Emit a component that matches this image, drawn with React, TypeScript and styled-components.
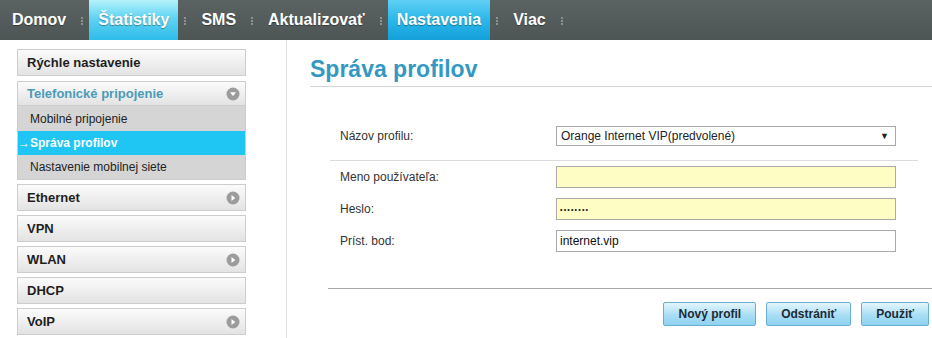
import React from "react";
import styled, { createGlobalStyle } from "styled-components";

const GlobalStyle = createGlobalStyle`
  body {
    margin: 0;
    background: #fff;
    font-family: "Liberation Sans", Arial, sans-serif;
  }
`;

const navItems = [
  { label: "Domov" },
  { label: "Štatistiky", active: "light" },
  { label: "SMS" },
  { label: "Aktualizovať" },
  { label: "Nastavenia", active: "strong" },
  { label: "Viac" },
];

const menu = [
  { label: "Rýchle nastavenie" },
  {
    label: "Telefonické pripojenie",
    open: true,
    sub: ["Mobilné pripojenie", "Správa profilov", "Nastavenie mobilnej siete"],
  },
  { label: "Ethernet", arrow: true },
  { label: "VPN" },
  { label: "WLAN", arrow: true },
  { label: "DHCP" },
  { label: "VoIP", arrow: true },
];

const Circle = ({ down }: { down?: boolean }) => (
  <svg width="14" height="14" viewBox="0 0 14 14">
    <circle cx="7" cy="7" r="6.5" fill="#9c9c9c" />
    {down ? (
      <polygon points="4,5.3 10,5.3 7,9" fill="#fff" />
    ) : (
      <polygon points="5.5,4 9.3,7 5.5,10" fill="#fff" />
    )}
  </svg>
);

export default function App() {
  return (
    <Page>
      <GlobalStyle />
      <NavBar>
        {navItems.map((n) => (
          <React.Fragment key={n.label}>
            <NavItem $active={n.active}>{n.label}</NavItem>
            <NavSep />
          </React.Fragment>
        ))}
      </NavBar>
      <Body>
        <Sidebar>
          {menu.map((m) => (
            <MenuGroup key={m.label}>
              <MenuItem $open={m.open}>
                <span>{m.label}</span>
                {(m.arrow || m.open) && <Circle down={m.open} />}
              </MenuItem>
              {m.sub && (
                <SubMenu>
                  {m.sub.map((s) => (
                    <SubItem key={s} $selected={s === "Správa profilov"}>
                      {s === "Správa profilov" ? "→" + s : s}
                    </SubItem>
                  ))}
                </SubMenu>
              )}
            </MenuGroup>
          ))}
        </Sidebar>
        <Main>
          <Title>Správa profilov</Title>
          <Form>
            <Row>
              <Label>Názov profilu:</Label>
              <SelectBox>
                <span>Orange Internet VIP(predvolené)</span>
                <span>▼</span>
              </SelectBox>
            </Row>
            <Divider />
            <Row>
              <Label>Meno používateľa:</Label>
              <Field $yellow defaultValue="" />
            </Row>
            <Row>
              <Label>Heslo:</Label>
              <Field $yellow $secret type="password" defaultValue="12345678" />
            </Row>
            <Row>
              <Label>Príst. bod:</Label>
              <Field defaultValue="internet.vip" />
            </Row>
          </Form>
          <BottomLine />
          <Buttons>
            <Button>Nový profil</Button>
            <Button>Odstrániť</Button>
            <Button>Použiť</Button>
          </Buttons>
        </Main>
      </Body>
    </Page>
  );
}

const Page = styled.div`
  width: 932px;
  height: 338px;
  overflow: hidden;
`;

const NavBar = styled.div`
  height: 40px;
  display: flex;
  align-items: stretch;
  padding-left: 3px;
  background: linear-gradient(#5b6262, #4d5555);
`;

const NavItem = styled.div<{ $active?: string }>`
  display: flex;
  align-items: center;
  padding: 0 9px;
  font-size: 16px;
  font-weight: bold;
  color: #fff;
  text-shadow: 0 1px 1px rgba(0, 0, 0, 0.35);
  background: ${({ $active }) =>
    $active === "light"
      ? "linear-gradient(#b5f1fb, #5fd3f2 45%, #2fbcea)"
      : $active === "strong"
      ? "linear-gradient(#5fd0f3, #2bb7ea 50%, #149fd8)"
      : "transparent"};
`;

const NavSep = styled.span`
  align-self: center;
  width: 0;
  height: 8px;
  margin: 2px 6px 0;
  border-left: 2px dotted #8b9292;
`;

const Body = styled.div`
  display: flex;
  height: 298px;
`;

const Sidebar = styled.div`
  width: 229px;
  padding: 9px 40px 0 17px;
  border-right: 1px solid #e2e2e2;
`;

const MenuGroup = styled.div`
  margin-bottom: 4px;
  &:first-child {
    margin-bottom: 5px;
  }
`;

const MenuItem = styled.div<{ $open?: boolean }>`
  height: ${({ $open }) => ($open ? "23px" : "25px")};
  display: flex;
  align-items: center;
  justify-content: space-between;
  padding: 0 5px 0 9px;
  border: 1px solid #cdcdcd;
  background: linear-gradient(#fbfbfb, #e3e3e3);
  font-size: 13px;
  font-weight: bold;
  color: ${({ $open }) => ($open ? "#4a9bb8" : "#1e1e1e")};
`;

const SubMenu = styled.div`
  background: #d5d5d5;
  border: 1px solid #cdcdcd;
  border-top: none;
  padding-top: 1px;
`;

const SubItem = styled.div<{ $selected?: boolean }>`
  height: 24px;
  display: flex;
  align-items: center;
  padding-left: ${({ $selected }) => ($selected ? "0" : "12px")};
  font-size: 12px;
  font-weight: ${({ $selected }) => ($selected ? "bold" : "normal")};
  color: ${({ $selected }) => ($selected ? "#fff" : "#222")};
  background: ${({ $selected }) => ($selected ? "#1fc6f4" : "transparent")};
`;

const Main = styled.div`
  flex: 1;
  padding-left: 23px;
`;

const Title = styled.h1`
  margin: 14px 0 0;
  padding-bottom: 2px;
  line-height: 30px;
  font-size: 23px;
  font-weight: bold;
  color: #3399c3;
  border-bottom: 1px solid #d4d4d4;
`;

const Form = styled.div`
  margin: 33px 14px 0 20px;
`;

const Row = styled.div`
  height: 32px;
  display: flex;
  align-items: center;
  padding-left: 10px;
`;

const Label = styled.div`
  width: 216px;
  font-size: 12px;
  color: #333;
`;

const SelectBox = styled.div`
  width: 340px;
  height: 20px;
  box-sizing: border-box;
  display: flex;
  align-items: center;
  justify-content: space-between;
  padding: 0 6px 0 4px;
  border: 1px solid #a9a9a9;
  font-size: 12px;
  color: #222;
  & > span:last-child {
    font-size: 9px;
  }
`;

const Divider = styled.div`
  margin-top: 8px;
  border-top: 1px solid #dcdcdc;
`;

const Field = styled.input<{ $yellow?: boolean; $secret?: boolean }>`
  width: 340px;
  height: 22px;
  box-sizing: border-box;
  margin: 0;
  padding: 0 3px;
  border: 1px solid #aaa;
  background: ${({ $yellow }) => ($yellow ? "#fdfdc4" : "#fff")};
  font-family: "Liberation Sans", Arial, sans-serif;
  font-size: ${({ $secret }) => ($secret ? "7px" : "12px")};
  letter-spacing: ${({ $secret }) => ($secret ? "1.2px" : "normal")};
  color: #111;
  outline: none;
`;

const BottomLine = styled.div`
  margin: 31px 0 0 18px;
  border-top: 1px solid #a8a8a8;
`;

const Buttons = styled.div`
  display: flex;
  justify-content: flex-end;
  gap: 10px;
  margin-top: 13px;
  padding-right: 3px;
`;

const Button = styled.button`
  height: 24px;
  padding: 0 14px;
  border: 1px solid #68aed3;
  border-radius: 2px;
  background: linear-gradient(#e4f6fd, #a9def5 55%, #8ed2f0);
  font-family: "Liberation Sans", Arial, sans-serif;
  font-size: 12px;
  font-weight: bold;
  color: #1d2a36;
`;
